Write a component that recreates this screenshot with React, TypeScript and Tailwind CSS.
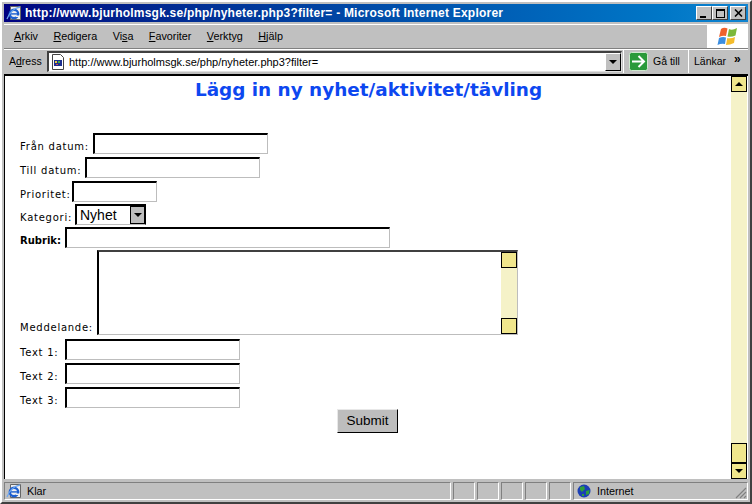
const MENU = [
  { pre: '', key: 'A', post: 'rkiv' },
  { pre: '', key: 'R', post: 'edigera' },
  { pre: 'Vi', key: 's', post: 'a' },
  { pre: '', key: 'F', post: 'avoriter' },
  { pre: '', key: 'V', post: 'erktyg' },
  { pre: '', key: 'H', post: 'jälp' },
]

function IeIcon() {
  return (
    <svg width="17" height="16" viewBox="0 0 17 16">
      <path d="M4.500 1.500 H14.500 V14.500 H4.500 Z" fill="#f0f0f0" stroke="#666" />
      <circle cx="8" cy="9" r="4.200" fill="none" stroke="#1c5fd0" strokeWidth="2.400" />
      <rect x="5" y="8.200" width="7" height="1.400" fill="#1c5fd0" />
      <rect x="10" y="10.500" width="4" height="1.500" fill="#f0f0f0" />
      <path d="M1 14 C3 8 8 3 14 2" stroke="#6ea6ee" strokeWidth="1.300" fill="none" />
    </svg>
  )
}

function PageIcon() {
  return (
    <svg width="14" height="16" viewBox="0 0 14 16">
      <path d="M1.500 .5 H9.500 L12.500 3.500 V15.500 H1.500 Z" fill="#fff" stroke="#444" />
      <rect x="3" y="6" width="8" height="6" fill="#1c2f90" />
      <rect x="4" y="7" width="2" height="2" fill="#e8c83c" />
      <rect x="7" y="7" width="2" height="2" fill="#3cb043" />
      <rect x="5" y="10" width="2" height="1" fill="#e05040" />
    </svg>
  )
}

function GlobeIcon() {
  return (
    <svg width="14" height="14" viewBox="0 0 14 14">
      <circle cx="7" cy="7" r="6.500" fill="#1b3fb5" />
      <path d="M3 3 L7 2 L8 5 L5 8 L3 6 Z" fill="#2f9e3c" />
      <path d="M9 7 L12.500 6 L12 10 L9 11 Z" fill="#2f9e3c" />
      <rect x="5" y="10" width="2" height="2" fill="#2f9e3c" />
    </svg>
  )
}

function Flag() {
  return (
    <svg width="22" height="20" viewBox="0 0 22 20">
      <path d="M4 2 Q7 0 10.500 1.500 L9 9 Q6 8 2 10 Z" fill="#f0622c" />
      <path d="M12 2 Q15 4 20 1 L18.500 8.500 Q14 10.500 10.500 9.500 Z" fill="#7cb83a" />
      <path d="M2 11 Q5.500 9.500 9 10.500 L8 17 Q4.500 16 0.500 18 Z" fill="#3c8ee0" />
      <path d="M10.300 11 Q14 12 18 10 L17 16 Q13 18 9 18 Z" fill="#f4bc2c" />
    </svg>
  )
}

function DownArrow() {
  return <svg width="8" height="4" viewBox="0 0 8 4"><path d="M0 0 H8 L4 4 Z" fill="#000" /></svg>
}

function Field({ label, rowClass, labelClass, inputClass, bold }: { label: string; rowClass: string; labelClass: string; inputClass: string; bold?: boolean }) {
  return (
    <div className={`flex items-end ${rowClass}`}>
      <span className={`text-[10px] leading-[14px] text-black whitespace-nowrap ${bold ? 'font-bold' : 'tracking-[0.75px]'} ${labelClass}`}>{label}</span>
      <input
        type="text"
        className={`h-[21px] bg-white border-t-2 border-l-2 border-t-black border-l-black border-r border-b border-r-[#bdbdbd] border-b-[#bdbdbd] outline-none ${inputClass}`}
      />
    </div>
  )
}

export default function App() {
  return (
    <div className="w-[752px] h-[504px] bg-[#c0c0c0] flex flex-col overflow-hidden border-t-2 border-l-2 border-white border-r-2 border-r-[#404040] border-b-2 border-b-[#404040] font-['Liberation_Sans',sans-serif]">
      <div className="flex flex-col h-full p-[2px]">
        {/* Title bar */}
        <div className="h-[18px] shrink-0 flex items-center bg-gradient-to-r from-[#000080] to-[#1084d0] pl-[2px] pr-[2px]">
          <IeIcon />
          <span className="ml-[2px] text-white font-bold text-[12px] tracking-[0.22px] whitespace-nowrap">
            http://www.bjurholmsgk.se/php/nyheter.php3?filter= - Microsoft Internet Explorer
          </span>
          <div className="ml-auto flex items-center">
            {['min', 'max'].map(b => (
              <div key={b} className="w-[16px] h-[14px] bg-[#c0c0c0] border border-white border-r-[#404040] border-b-[#404040] flex items-center justify-center">
                {b === 'min' ? (
                  <div className="w-[6px] h-[2px] bg-black mt-[7px] mr-[2px]" />
                ) : (
                  <div className="w-[9px] h-[9px] border border-black border-t-2" />
                )}
              </div>
            ))}
            <div className="ml-[2px] w-[16px] h-[14px] bg-[#c0c0c0] border border-white border-r-[#404040] border-b-[#404040] flex items-center justify-center">
              <svg width="9" height="8" viewBox="0 0 9 8"><path d="M1 0.500 L8 7.500 M8 0.500 L1 7.500" stroke="#000" strokeWidth="1.600" /></svg>
            </div>
          </div>
        </div>

        {/* Menu bar */}
        <div className="h-[25px] mt-[2px] shrink-0 flex items-center border-t border-white border-b border-b-[#808080] pl-[10px] text-[10.8px] text-black">
          <div className="flex gap-[15.4px]">
            {MENU.map(m => (
              <span key={m.post}>{m.pre}<u>{m.key}</u>{m.post}</span>
            ))}
          </div>
          <div className="ml-auto w-[41px] h-full bg-white flex items-center justify-center">
            <Flag />
          </div>
        </div>

        {/* Address bar */}
        <div className="h-[24px] shrink-0 flex items-center border-t border-white text-[10.5px] text-black">
          <span className="pl-[5px] w-[43px]">A<u>d</u>ress</span>
          <div className="w-[575px] h-[21px] bg-white border-t-2 border-l-2 border-t-[#404040] border-l-[#404040] border-b border-r border-b-[#dfdfdf] border-r-[#dfdfdf] flex items-center pl-[2px]">
            <PageIcon />
            <span className="ml-[4px] text-[11px]">http://www.bjurholmsgk.se/php/nyheter.php3?filter=</span>
            <div className="ml-auto w-[16px] h-[18px] bg-[#c0c0c0] border border-white border-r-black border-b-black flex items-center justify-center">
              <DownArrow />
            </div>
          </div>
          <div className="ml-[1px] pl-[5px] h-full w-[65px] flex items-center border-l border-white">
            <svg width="19" height="19" viewBox="0 0 19 19">
              <rect x="0.500" y="0.500" width="18" height="18" rx="2" fill="#2a9a3a" stroke="#cfe8cf" />
              <path d="M3 9.500 H14 M9.500 4 L15 9.500 L9.500 15" stroke="#fff" strokeWidth="2" fill="none" />
            </svg>
            <span className="ml-[5px]">Gå till</span>
          </div>
          <div className="h-full flex-1 pl-[5px] flex items-center border-l border-white">
            <span>Länkar</span>
            <span className="ml-[8px] mb-[6px] text-[12px] font-bold leading-none">»</span>
          </div>
        </div>

        {/* Page */}
        <div className="h-[405px] shrink-0 mt-[1px] flex border-t-2 border-l border-t-black border-l-black bg-white font-['DejaVu_Sans',sans-serif]">
          <div className="w-[726px] pl-[15px]">
            <h1 className="mt-[1px] text-[18.4px] leading-[26px] font-bold text-[#0d47f0] text-center pr-[14px]">Lägg in ny nyhet/aktivitet/tävling</h1>
            <div className="mt-[27px] flex flex-col">
              <Field label="Från datum:" rowClass="h-[24px]" labelClass="w-[73px]" inputClass="w-[175px]" />
              <Field label="Till datum:" rowClass="h-[24px]" labelClass="w-[65px]" inputClass="w-[175px]" />
              <Field label="Prioritet:" rowClass="h-[24px]" labelClass="w-[52px]" inputClass="w-[85px]" />
              <div className="flex items-end h-[23px]">
                <span className="w-[55px] text-[10px] leading-[14px] tracking-[0.75px] text-black whitespace-nowrap">Kategori:</span>
                <div className="w-[71px] h-[21px] border-t-2 border-l-2 border-t-black border-l-black border-r border-r-black border-b border-b-[#bdbdbd] flex items-center">
                  <span className="flex-1 pl-[3px] text-[14px] font-['Liberation_Sans',sans-serif] leading-none">Nyhet</span>
                  <div className="w-[15px] h-full bg-[#bdbdbd] border border-black flex items-center justify-center">
                    <DownArrow />
                  </div>
                </div>
              </div>
              <Field label="Rubrik:" bold rowClass="h-[23px]" labelClass="w-[45px]" inputClass="w-[325px]" />
              <div className="flex items-end h-[87px]">
                <span className="w-[77px] text-[10px] leading-[14px] tracking-[0.75px] text-black whitespace-nowrap">Meddelande:</span>
                <div className="w-[421px] h-[85px] flex bg-white border-t-2 border-l-2 border-t-[#404040] border-l-black border-r border-b border-r-[#bdbdbd] border-b-[#bdbdbd]">
                  <div className="flex-1" />
                  <div className="w-[16px] bg-[#f5f2c8] flex flex-col justify-between">
                    <div className="h-[16px] bg-[#f0e68c] border border-black" />
                    <div className="h-[16px] bg-[#f0e68c] border border-black" />
                  </div>
                </div>
              </div>
              <Field label="Text 1:" rowClass="h-[25px]" labelClass="w-[45px]" inputClass="w-[175px]" />
              <Field label="Text 2:" rowClass="h-[24px]" labelClass="w-[45px]" inputClass="w-[175px]" />
              <Field label="Text 3:" rowClass="h-[24px]" labelClass="w-[45px]" inputClass="w-[175px]" />
              <div className="flex justify-center pr-[16px] mt-[1px]">
                <button className="w-[61px] h-[24px] bg-[#bdbdbd] text-[13.5px] font-['Liberation_Sans',sans-serif] text-black border border-t-[#e8e8e8] border-l-[#e8e8e8] border-r-black border-b-black">
                  Submit
                </button>
              </div>
            </div>
          </div>
          <div className="w-[16px] bg-[#f5f2c8] flex flex-col">
            <div className="h-[16px] bg-[#f0e68c] border border-black flex items-center justify-center shrink-0">
              <svg width="8" height="4" viewBox="0 0 8 4"><path d="M0 4 H8 L4 0 Z" fill="#000" /></svg>
            </div>
            <div className="mt-auto h-[20px] bg-[#f0e68c] border border-black" />
            <div className="h-[16px] bg-[#f0e68c] border border-black flex items-center justify-center shrink-0">
              <DownArrow />
            </div>
          </div>
        </div>

        {/* Status bar */}
        <div className="mt-[3px] flex-1 flex gap-[2px] text-[10.8px] text-black">
          <div className="w-[447px] flex items-center border-t border-l border-[#808080] border-r border-r-white border-b border-b-white pl-[1px]">
            <IeIcon />
            <span className="ml-[4px]">Klar</span>
          </div>
          {[0, 1, 2, 3, 4].map(i => (
            <div key={i} className="w-[22px] border-t border-l border-[#808080] border-r border-r-white border-b border-b-white" />
          ))}
          <div className="flex-1 flex items-center border-t border-l border-[#808080] border-r border-r-white border-b border-b-white pl-[3px]">
            <GlobeIcon />
            <span className="ml-[6px]">Internet</span>
            <svg className="ml-auto mt-auto" width="12" height="12" viewBox="0 0 12 12">
              <path d="M11 1 L1 11 M11 5 L5 11 M11 9 L9 11" stroke="#808080" strokeWidth="1.200" />
            </svg>
          </div>
        </div>
      </div>
    </div>
  )
}
